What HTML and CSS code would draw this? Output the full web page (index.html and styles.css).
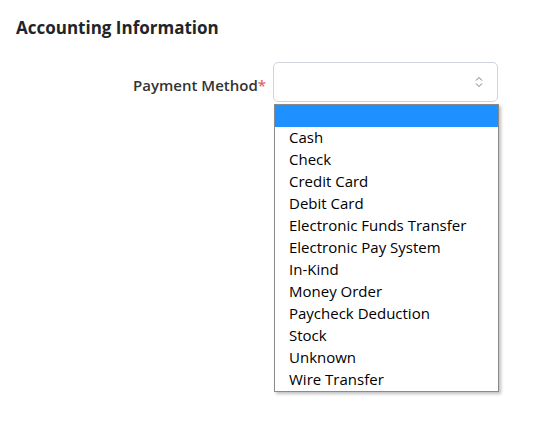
FILE: index.html
```html
<!DOCTYPE html>
<html>
<head>
<meta charset="utf-8">
<link rel="stylesheet" href="styles.css">
</head>
<body>
<div class="page">
  <h2 class="section-title">Accounting Information</h2>
  <div class="form-row">
    <label class="field-label">Payment Method<span class="req">*</span></label>
    <div class="field">
      <div class="select-box">
        <svg class="chev" width="10" height="14" viewBox="0 0 10 14"><path d="M2 5.5 L5 2.5 L8 5.5" fill="none" stroke="#777" stroke-width="1"/><path d="M2 8.5 L5 11.5 L8 8.5" fill="none" stroke="#777" stroke-width="1"/></svg>
      </div>
      <ul class="listbox">
        <li class="opt selected">&nbsp;</li>
        <li class="opt">Cash</li>
        <li class="opt">Check</li>
        <li class="opt">Credit Card</li>
        <li class="opt">Debit Card</li>
        <li class="opt">Electronic Funds Transfer</li>
        <li class="opt">Electronic Pay System</li>
        <li class="opt">In-Kind</li>
        <li class="opt">Money Order</li>
        <li class="opt">Paycheck Deduction</li>
        <li class="opt">Stock</li>
        <li class="opt">Unknown</li>
        <li class="opt">Wire Transfer</li>
      </ul>
    </div>
  </div>
</div>
</body>
</html>
```
FILE: styles.css
```css
html, body {
  margin: 0;
  padding: 0;
  background: #fff;
  min-height: 448px;
}
.page {
  font-family: "Open Sans", "Noto Sans", sans-serif;
  color: #212529;
  padding: 15px 16px 14px;
}
.section-title {
  margin: 0;
  font-size: 17px;
  font-weight: 700;
  line-height: 26px;
}
.form-row {
  display: flex;
  align-items: flex-start;
  margin-top: 21px;
}
.field-label {
  width: 250px;
  text-align: right;
  font-size: 15px;
  font-weight: 600;
  color: #333;
  line-height: 46px;
  padding-right: 7px;
}
.req {
  color: #e06666;
}
.field {
  width: 226px;
  display: flex;
  flex-direction: column;
}
.select-box {
  height: 40px;
  width: 225px;
  box-sizing: border-box;
  border: 1px solid #ced4da;
  border-radius: 5px;
  background: #fff;
  display: flex;
  align-items: center;
  justify-content: flex-end;
  padding-right: 13px;
}
.chev {
  display: block;
}
.listbox {
  margin: 2px 0 0 1px;
  width: 225px;
  padding: 0;
  list-style: none;
  box-sizing: border-box;
  border: 1px solid #8a8a8a;
  background: #fff;
  box-shadow: 2px 2px 3px rgba(0,0,0,0.25);
}
.opt {
  height: 22px;
  line-height: 20px;
  padding-left: 14px;
  font-size: 15px;
  color: #000;
  white-space: nowrap;
}
.opt.selected {
  background: #1e90ff;
}
```
